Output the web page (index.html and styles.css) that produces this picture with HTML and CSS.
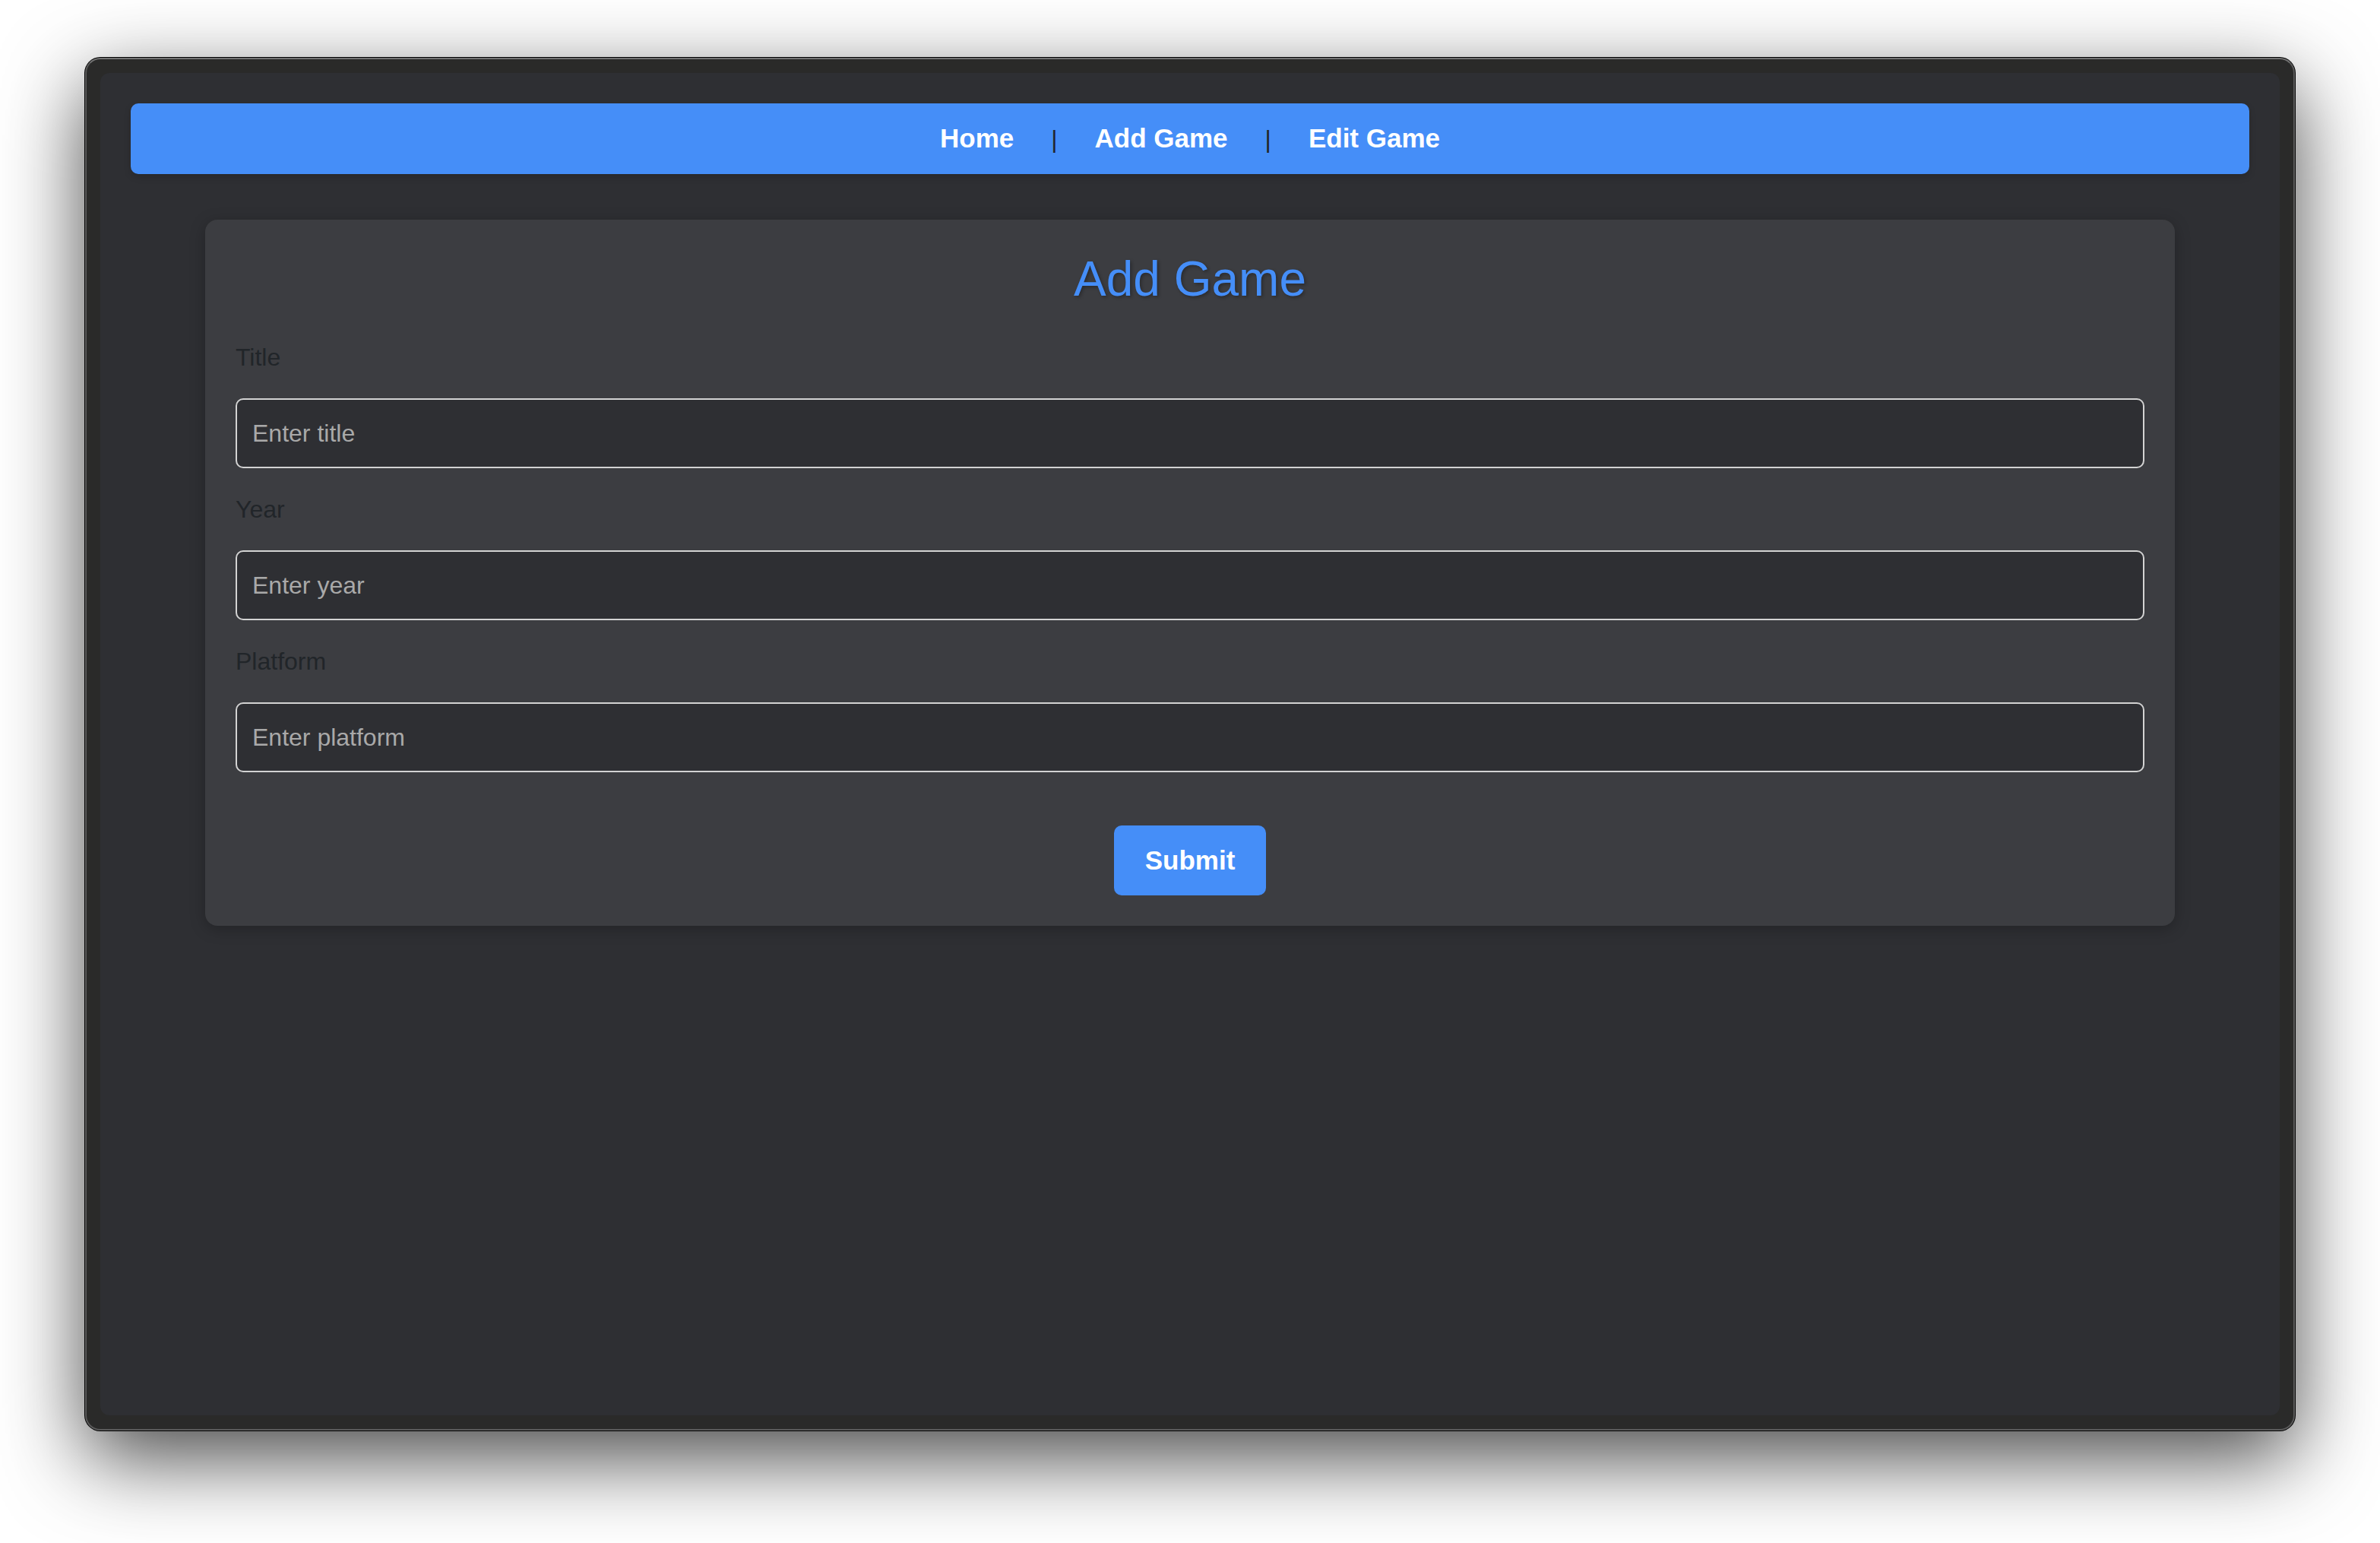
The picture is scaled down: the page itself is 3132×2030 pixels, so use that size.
FILE: index.html
```
<!DOCTYPE html>
<html lang="en">
<head>
  <meta charset="utf-8">
  <meta name="viewport" content="width=device-width, initial-scale=1">
  <title>Add Game</title>
  <link rel="stylesheet" href="styles.css">
</head>
<body>
  <div class="window">
    <div class="page">
      <nav class="nav">
        <a class="nav-link" href="#home">Home</a>
        <span class="nav-divider">|</span>
        <a class="nav-link" href="#add">Add Game</a>
        <span class="nav-divider">|</span>
        <a class="nav-link" href="#edit">Edit Game</a>
      </nav>
      <main class="card">
        <h1 class="card-title">Add Game</h1>
        <form class="form">
          <label class="label" for="title">Title</label>
          <input class="input" id="title" type="text" placeholder="Enter title">
          <label class="label" for="year">Year</label>
          <input class="input" id="year" type="text" placeholder="Enter year">
          <label class="label" for="platform">Platform</label>
          <input class="input" id="platform" type="text" placeholder="Enter platform">
          <button class="submit" type="submit">Submit</button>
        </form>
      </main>
    </div>
  </div>
</body>
</html>
```
FILE: styles.css
```
:root {
  --accent: #458ef8;
  --page: #2e2f33;
  --card: #3c3d41;
  --ink: #212529;
}

* {
  box-sizing: border-box;
}

body {
  display: flex;
  min-height: 100vh;
  margin: 0;
  padding: 76px 112px 148px;
  background: #fff;
  color: var(--ink);
  font-family: "Liberation Sans", Arial, sans-serif;
  font-size: 32px;
  line-height: 48px;
}

/* Window frame */
.window {
  display: flex;
  flex: 1;
  padding: 18px;
  border: 2px solid #5a5a5a;
  border-top-color: #737373;
  border-radius: 20px;
  background: #2a2a29;
  box-shadow: 0 0 0 1px #000, 0 36px 110px rgba(0, 0, 0, 0.72);
}

.page {
  flex: 1;
  padding: 40px;
  border-radius: 12px;
  background: var(--page);
}

/* Navigation */
.nav {
  display: flex;
  justify-content: center;
  align-items: baseline;
  gap: 49px;
  padding: 20px 20px 22px;
  border-radius: 10px;
  background: var(--accent);
  box-shadow: 0 4px 10px rgba(0, 0, 0, 0.15);
}

.nav-link {
  color: #fff;
  font-size: 35px;
  font-weight: bold;
  line-height: 51px;
  text-decoration: none;
}

/* Form card */
.card {
  max-width: 2592px;
  margin: 60px auto 0;
  padding: 40px;
  border-radius: 16px;
  background: var(--card);
  box-shadow: 0 4px 20px rgba(0, 0, 0, 0.25);
}

.card-title {
  margin: 0 0 40px;
  color: var(--accent);
  font-size: 64px;
  font-weight: normal;
  line-height: 77px;
  text-align: center;
  text-shadow: 2px 2px 4px rgba(0, 0, 0, 0.3);
}

.form {
  display: flex;
  flex-direction: column;
  gap: 30px;
}

.input {
  width: 100%;
  height: 92px;
  padding: 20px;
  border: 2px solid #d3d3d3;
  border-radius: 10px;
  background: var(--page);
  color: #fff;
  font: inherit;
}

.input::placeholder {
  color: #a9a9a9;
  opacity: 1;
}

.submit {
  align-self: center;
  min-width: 200px;
  margin-top: 40px;
  padding: 20px;
  border: 0;
  border-radius: 10px;
  background: var(--accent);
  color: #fff;
  font: bold 35px/52px "Liberation Sans", Arial, sans-serif;
}
```
